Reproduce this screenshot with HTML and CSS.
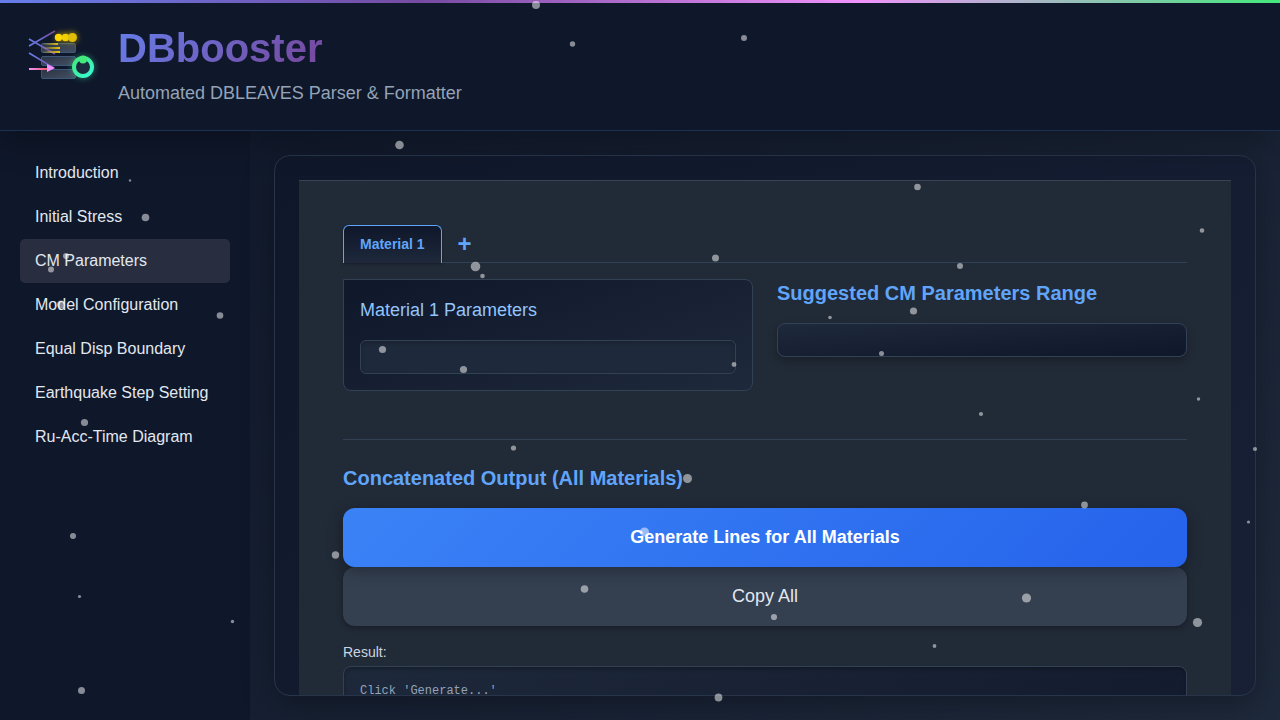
FILE: index.html
```html
<!DOCTYPE html>
<html lang="en">
<head>
<meta charset="utf-8">
<meta name="viewport" content="width=device-width, initial-scale=1">
<title>DBbooster</title>
<link rel="stylesheet" href="styles.css">
</head>
<body>
<header class="header">
  <svg class="logo" viewBox="24 20 78 66" aria-hidden="true">
    <defs>
      <linearGradient id="line" x1="29" y1="0" x2="55" y2="0" gradientUnits="userSpaceOnUse"><stop offset="0" stop-color="#667eea"/><stop offset="1" stop-color="#764ba2"/></linearGradient>
      <linearGradient id="arrow" x1="29" y1="0" x2="47" y2="0" gradientUnits="userSpaceOnUse"><stop offset="0" stop-color="#f093fb"/><stop offset="1" stop-color="#f5576c"/></linearGradient>
      <linearGradient id="slab" x1="0" y1="0" x2="1" y2="1"><stop offset="0" stop-color="#2d3748"/><stop offset="1" stop-color="#4a5568"/></linearGradient>
      <linearGradient id="gold" x1="42" y1="0" x2="60" y2="0" gradientUnits="userSpaceOnUse"><stop offset="0" stop-color="#ffd700" stop-opacity="0"/><stop offset="1" stop-color="#ffd700"/></linearGradient>
      <linearGradient id="ring" x1="0" y1="0" x2="1" y2="1"><stop offset="0" stop-color="#43e97b"/><stop offset="1" stop-color="#38f9d7"/></linearGradient>
      <filter id="glow" x="-70%" y="-70%" width="240%" height="240%"><feGaussianBlur stdDeviation="3"/></filter>
    </defs>
    <g fill="url(#slab)" fill-opacity=".9" stroke="#3c5878">
      <rect x="41.500" y="43.500" width="34" height="9" rx="1.500"/>
      <rect x="41.500" y="56.500" width="34" height="9" rx="1.500"/>
      <rect x="41.500" y="69.500" width="34" height="9" rx="1.500"/>
    </g>
    <path d="M29 46 55 31M29 39 55 54M29 53 54 68" stroke="url(#line)" stroke-width="1.600" fill="none"/>
    <path d="M29 68h18v2H29z" fill="url(#arrow)"/>
    <path d="M47 64v8l8-4z" fill="#f093fb"/>
    <path d="M41 43h17v2H41zM42 47h18v2H42zM43 51h17v2H43z" fill="url(#gold)" opacity=".9"/>
    <g filter="url(#glow)" opacity=".6" fill="#ffd700"><circle cx="60" cy="37.500" r="4"/><circle cx="66" cy="37.500" r="4"/><circle cx="72" cy="37.500" r="5"/></g>
    <circle cx="58.500" cy="37.500" r="3.700" fill="#ffd700"/><circle cx="65.500" cy="37.500" r="3.700" fill="#f2cd05"/><circle cx="72.500" cy="37.500" r="4.500" fill="#dfbd08"/>
    <circle cx="83" cy="67" r="9" fill="none" stroke="#38d998" stroke-width="4" opacity=".6" filter="url(#glow)"/>
    <circle cx="83" cy="67" r="9" fill="#1c2a3d" stroke="url(#ring)" stroke-width="4"/>
    <circle cx="83" cy="59.500" r="4" fill="#43e97b"/>
  </svg>
  <div>
    <h1 class="brand">DBbooster</h1>
    <p class="tagline">Automated DBLEAVES Parser &amp; Formatter</p>
  </div>
</header>
<div class="body">
  <nav class="sidebar">
    <a class="nav-link" href="#intro">Introduction</a>
    <a class="nav-link" href="#stress">Initial Stress</a>
    <a class="nav-link active" href="#cm">CM Parameters</a>
    <a class="nav-link" href="#model">Model Configuration</a>
    <a class="nav-link" href="#disp">Equal Disp Boundary</a>
    <a class="nav-link" href="#earthquake">Earthquake Step Setting</a>
    <a class="nav-link" href="#diagram">Ru-Acc-Time Diagram</a>
  </nav>
  <main class="main">
    <div class="frame">
      <div class="content">
        <div class="tabs">
          <button class="tab" type="button">Material 1</button>
          <button class="tab-add" type="button" aria-label="Add material">+</button>
        </div>
        <div class="columns">
          <section class="card">
            <h2 class="card-title">Material 1 Parameters</h2>
            <div class="well"></div>
          </section>
          <section>
            <h2 class="section-title">Suggested CM Parameters Range</h2>
            <div class="range"></div>
          </section>
        </div>
        <section class="output">
          <h2 class="section-title">Concatenated Output (All Materials)</h2>
          <button class="btn btn-primary" type="button">Generate Lines for All Materials</button>
          <button class="btn btn-secondary" type="button">Copy All</button>
          <h3 class="result-label">Result:</h3>
          <pre class="result">Click 'Generate...'</pre>
        </section>
      </div>
    </div>
  </main>
</div>
<svg class="particles" aria-hidden="true">
  <circle cx="536" cy="5" r="4"/><circle cx="572.500" cy="44" r="2.700"/><circle cx="744" cy="38" r="3"/>
  <circle cx="399.500" cy="145" r="4.300"/><circle cx="130" cy="180.500" r="1.200"/><circle cx="145.500" cy="217.500" r="3.800"/>
  <circle cx="66" cy="256" r="3"/><circle cx="51" cy="269.500" r="3"/><circle cx="61" cy="304.500" r="4"/>
  <circle cx="220" cy="315.500" r="3.300"/><circle cx="84.500" cy="422.500" r="3.600"/><circle cx="73" cy="536" r="3"/>
  <circle cx="79.500" cy="596.500" r="1.600"/><circle cx="232.500" cy="621.500" r="1.700"/><circle cx="81.500" cy="690.500" r="3.500"/>
  <circle cx="475.500" cy="266.500" r="4.800"/><circle cx="482.500" cy="276" r="2.300"/><circle cx="715.500" cy="258" r="3.500"/>
  <circle cx="917.500" cy="187" r="3.300"/><circle cx="1202" cy="230.500" r="2.300"/><circle cx="960" cy="266" r="3"/>
  <circle cx="913.500" cy="311" r="3.600"/><circle cx="830" cy="317.500" r="1.800"/><circle cx="881.500" cy="353.500" r="2.500"/>
  <circle cx="382.500" cy="349.500" r="3.600"/><circle cx="463.500" cy="369.500" r="3.600"/><circle cx="734" cy="364.500" r="2.400"/>
  <circle cx="981" cy="414" r="2.100"/><circle cx="1198.500" cy="399" r="1.700"/><circle cx="1255" cy="449" r="2.100"/>
  <circle cx="513.500" cy="448" r="2.600"/><circle cx="687.500" cy="478.500" r="4.500"/><circle cx="644.500" cy="532" r="4.600"/>
  <circle cx="1084.500" cy="505" r="3.400"/><circle cx="1248.500" cy="522" r="1.600"/><circle cx="335.500" cy="555" r="3.700"/>
  <circle cx="584.500" cy="589" r="3.800"/><circle cx="774" cy="617" r="3.100"/><circle cx="1026.500" cy="598" r="4.600"/>
  <circle cx="1197.500" cy="622.500" r="4.600"/><circle cx="934.500" cy="646" r="1.900"/><circle cx="718.500" cy="697.500" r="3.900"/>
</svg>
</body>
</html>
```
FILE: styles.css
```css
* { box-sizing: border-box; }

body {
  margin: 0;
  height: 100vh;
  display: flex;
  flex-direction: column;
  overflow: hidden;
  font-family: "Liberation Sans", Arial, sans-serif;
  font-size: 16px;
  color: #e2e8f0;
  background: linear-gradient(135deg, #0f172a, #1e293b);
}

h1, h2, h3, p, pre { margin: 0; }

button { font-family: inherit; cursor: pointer; }

.header {
  position: relative;
  z-index: 1;
  display: flex;
  gap: 16px;
  padding: 24px;
  background: #0f172a;
  border-bottom: 1px solid #1c3150;
  box-shadow: 0 8px 32px rgba(0, 0, 0, 0.3);
}

.header::before {
  content: "";
  position: absolute;
  inset: 0 0 auto;
  height: 3px;
  background: linear-gradient(90deg, #667eea, #764ba2 33%, #f093fb 67%, #43e97b);
}

.logo { width: 78px; height: 66px; margin-top: -4px; overflow: visible; }

.brand {
  width: fit-content;
  font-size: 40px;
  line-height: 48px;
  color: transparent;
  background: linear-gradient(135deg, #667eea, #764ba2 90%, #8a55ad);
  background-clip: text;
  -webkit-background-clip: text;
}

.tagline {
  margin-top: 8px;
  font-size: 18px;
  line-height: 26px;
  color: #94a3b8;
}

.body { flex: 1; min-height: 0; display: flex; }

.sidebar { width: 250px; flex: none; padding: 20px; background: #0f172a; }

.nav-link {
  display: block;
  padding: 12px 15px;
  line-height: 20px;
  color: #e2e8f0;
  text-decoration: none;
  border-radius: 5px;
}

.nav-link.active { background: #282e3f; }

.main { flex: 1; min-width: 0; padding: 24px; }

.frame {
  height: 100%;
  padding: 24px;
  overflow: auto;
  scrollbar-width: none;
  background: linear-gradient(135deg, #0f172a, #172035);
  border: 1px solid #273449;
  border-radius: 16px;
  box-shadow: 0 8px 32px rgba(0, 0, 0, 0.3);
}

.content { padding: 44px; background: #212a37; border-top: 1px solid #374454; }

.tabs { display: flex; align-items: flex-end; gap: 8px; border-bottom: 1px solid #334155; }

.tab {
  height: 38px;
  margin-bottom: -1px;
  padding: 0 16px 2px;
  font-size: 14px;
  font-weight: bold;
  color: #60a5fa;
  background: linear-gradient(#0f172a, #1e293b);
  border: 1px solid #60a5fa;
  border-bottom: 0;
  border-radius: 6px 6px 0 0;
  box-shadow: 0 1px 3px rgba(0, 0, 0, 0.3);
}

.tab-add {
  height: 37px;
  padding: 0 8px;
  font-size: 24px;
  font-weight: bold;
  color: #60a5fa;
  background: none;
  border: 0;
}

.columns {
  display: grid;
  grid-template-columns: 1fr 1fr;
  gap: 24px;
  padding: 16px 0 48px;
}

.card {
  padding: 16px;
  background: linear-gradient(160deg, #0f172a, #1e293b);
  border: 1px solid #334155;
  border-radius: 0 8px 8px 8px;
}

.card-title {
  margin-bottom: 16px;
  font-size: 18px;
  font-weight: normal;
  line-height: 28px;
  color: #93c5fd;
}

.well {
  padding: 16px;
  background: #1e293b;
  border: 1px solid #334155;
  border-radius: 6px;
  box-shadow: inset 0 2px 4px rgba(0, 0, 0, 0.2);
}

.section-title {
  margin-bottom: 16px;
  font-size: 20px;
  line-height: 28px;
  color: #60a5fa;
}

.range {
  padding: 16px;
  background: linear-gradient(to bottom right, #1e293b, #0f172a);
  border: 1px solid #334155;
  border-radius: 8px;
  box-shadow: 0 4px 8px rgba(0, 0, 0, 0.25);
}

.output { padding-top: 24px; border-top: 1px solid #334155; }

.btn {
  display: block;
  width: 100%;
  padding: 16px;
  font-size: 18px;
  line-height: 27px;
  border: 0;
  border-radius: 12px;
}

.btn-primary {
  position: relative;
  font-weight: bold;
  color: #fff;
  background: linear-gradient(135deg, #3b82f6, #2563eb);
  box-shadow: 0 4px 16px rgba(0, 0, 0, 0.3);
}

.btn-secondary {
  color: #e2e8f0;
  background: #343f50;
  box-shadow: 0 2px 6px rgba(0, 0, 0, 0.3);
}

.result-label {
  margin: 16px 0 4px;
  font-size: 14px;
  font-weight: normal;
  line-height: 20px;
  color: #cbd5e1;
}

.result {
  min-height: 120px;
  padding: 16px;
  font-family: "Liberation Mono", monospace;
  font-size: 12px;
  line-height: 16px;
  color: #94a3b8;
  background: linear-gradient(165deg, #1e293b, #0f172a);
  border: 1px solid #334155;
  border-radius: 8px;
  box-shadow: inset 0 2px 4px rgba(0, 0, 0, 0.3);
}

.particles {
  position: fixed;
  inset: 0;
  z-index: 2;
  width: 100%;
  height: 100%;
  fill: rgba(255, 255, 255, 0.5);
  pointer-events: none;
}
```
